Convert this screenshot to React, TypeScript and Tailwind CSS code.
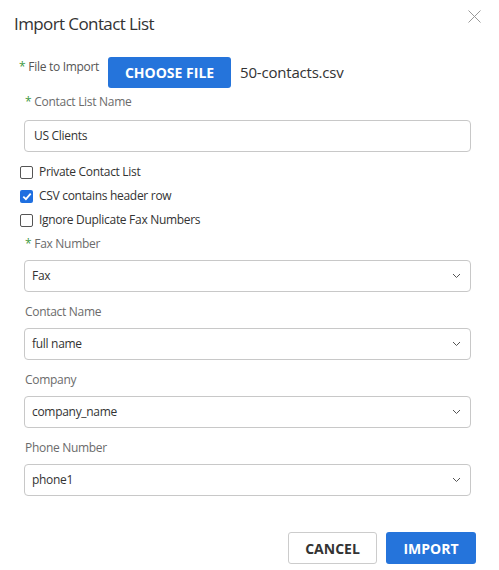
import React from "react";

function Chevron() {
  return (
    <svg width="9" height="6" viewBox="0 0 9 6" className="absolute right-[9px] top-1/2 -translate-y-1/2">
      <path d="M1 1 L4.5 4.5 L8 1" fill="none" stroke="#555" strokeWidth="1" />
    </svg>
  );
}

function Req() {
  return <span className="text-[#3f9a3f] mr-[3px]">*</span>;
}

function Field({ label, value, required }: { label: string; value: string; required?: boolean }) {
  return (
    <div className="flex flex-col">
      <div className="h-[20px] flex items-center text-[12px] tracking-[-0.3px] text-[#6b6b6b] pl-[1px]">
        {required && <Req />}
        {label}
      </div>
      <div className="relative mt-[6px] h-[32px] border border-[#c8c8c8] rounded-[4px] flex items-center px-[7px] text-[12px] tracking-[-0.3px] text-[#333]">
        {value}
        <Chevron />
      </div>
    </div>
  );
}

function Check({ label, checked }: { label: string; checked?: boolean }) {
  return (
    <div className="h-[24px] flex items-center pl-[20px]">
      {checked ? (
        <div className="w-[13px] h-[13px] rounded-[2px] bg-[#1f6fe0] flex items-center justify-center">
          <svg width="10" height="9" viewBox="0 0 10 9">
            <path d="M1.3 4.6 L3.9 7.1 L8.7 1.6" fill="none" stroke="white" strokeWidth="1.8" />
          </svg>
        </div>
      ) : (
        <div className="w-[13px] h-[13px] rounded-[2px] border border-[#555] bg-white" />
      )}
      <span className="ml-[6px] text-[12px] tracking-[-0.3px] text-[#333]">{label}</span>
    </div>
  );
}

export default function App() {
  return (
    <div
      className="relative w-[499px] h-[570px] bg-white flex flex-col"
      style={{ fontFamily: '"Open Sans", "Noto Sans", sans-serif' }}
    >
      <div className="flex items-start justify-between pt-[11px] pl-[14px] pr-[18px]">
        <h1 className="text-[17px] tracking-[-0.6px] leading-[26px] text-[#333]">Import Contact List</h1>
        <svg width="13" height="13" viewBox="0 0 13 13" className="mt-[-1px]">
          <path d="M0.5 0.5 L12.5 12.5 M12.5 0.5 L0.5 12.5" stroke="#999" strokeWidth="1" />
        </svg>
      </div>

      <div className="flex items-start pl-[19px] mt-[20px]">
        <div className="mt-[1px] text-[12px] tracking-[-0.3px] text-[#555] leading-[18px] flex items-center">
          <Req />
          File to Import
        </div>
        <button className="ml-[9px] w-[123px] h-[31px] rounded-[3px] bg-[#2574db] text-white text-[14px] font-bold">
          CHOOSE FILE
        </button>
        <span className="ml-[9px] h-[31px] flex items-center text-[15px] tracking-[-0.2px] text-[#333]">50-contacts.csv</span>
      </div>

      <div className="pl-[24px] pr-[28px] mt-[4px] flex flex-col">
        <div className="h-[20px] flex items-center text-[12px] tracking-[-0.3px] text-[#6b6b6b] pl-[1px]">
          <Req />
          Contact List Name
        </div>
        <div className="mt-[8px] h-[32px] border border-[#c8c8c8] rounded-[4px] flex items-center px-[9px] text-[12px] tracking-[-0.3px] text-[#333]">
          US Clients
        </div>
      </div>

      <div className="mt-[8px] flex flex-col">
        <Check label="Private Contact List" />
        <Check label="CSV contains header row" checked />
        <Check label="Ignore Duplicate Fax Numbers" />
      </div>

      <div className="pl-[24px] pr-[28px] mt-[2px] flex flex-col gap-[10px]">
        <Field label="Fax Number" value="Fax" required />
        <Field label="Contact Name" value="full name" />
        <Field label="Company" value="company_name" />
        <Field label="Phone Number" value="phone1" />
      </div>

      <div className="mt-auto mb-[6px] pr-[23px] flex justify-end gap-[9px]">
        <button className="w-[89px] h-[32px] rounded-[3px] border border-[#ccc] bg-white text-[#333] text-[14px] font-bold">
          CANCEL
        </button>
        <button className="w-[90px] h-[32px] rounded-[3px] bg-[#2574db] text-white text-[14px] font-bold">
          IMPORT
        </button>
      </div>
    </div>
  );
}
